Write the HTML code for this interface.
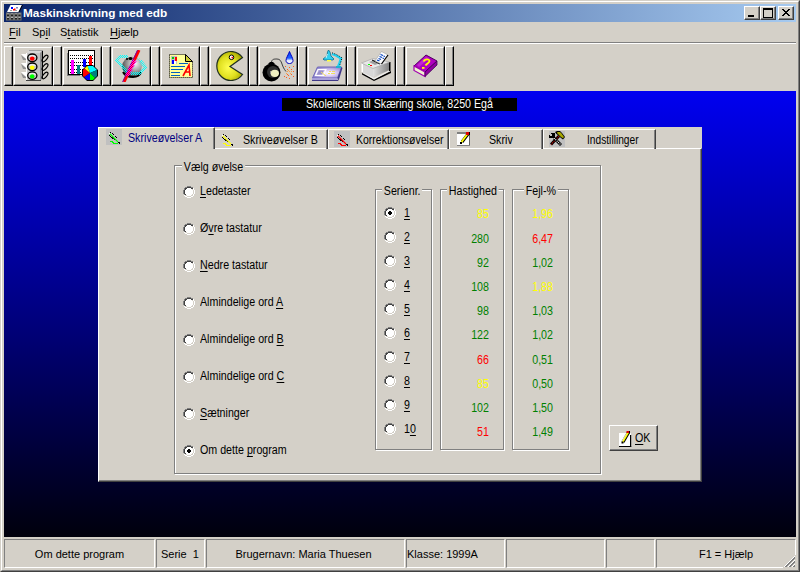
<!DOCTYPE html>
<html><head><meta charset="utf-8">
<style>
*{margin:0;padding:0;box-sizing:border-box}
html,body{width:800px;height:572px;overflow:hidden;background:#D4D0C8;font-family:"Liberation Sans",sans-serif;font-size:11px;color:#000}
.a{position:absolute}
.t{position:absolute;white-space:pre;line-height:13px}
u{text-decoration:underline;text-decoration-thickness:1px;text-underline-offset:1.5px;text-decoration-skip-ink:none}
/* window frame */
#frame{left:0;top:0;width:800px;height:572px;border-top:1px solid #D4D0C8;border-left:1px solid #D4D0C8;border-right:1px solid #404040;border-bottom:1px solid #404040}
#frame2{left:1px;top:1px;width:798px;height:570px;border-top:1px solid #fff;border-left:1px solid #fff;border-right:1px solid #808080;border-bottom:1px solid #808080}
#title{left:4px;top:4px;width:792px;height:18px;background:linear-gradient(to right,#0A246A,#A6CAF0)}
.cbtn{position:absolute;top:6px;width:16px;height:14px;background:#D4D0C8;border-top:1px solid #fff;border-left:1px solid #fff;border-right:1px solid #404040;border-bottom:1px solid #404040;box-shadow:inset -1px -1px 0 #808080}
.sep{position:absolute;top:46px;width:9px;height:40px;border-top:1px solid #fff;border-left:1px solid #fff;border-right:1px solid #000;border-bottom:1px solid #000;box-shadow:inset -1px -1px 0 #808080}
.btn{position:absolute;top:46px;width:40px;height:40px;border-top:1px solid #D4D0C8;border-left:1px solid #D4D0C8;border-right:1px solid #000;border-bottom:1px solid #000}
.btn>div{position:absolute;left:0;top:0;width:38px;height:38px;border-top:1px solid #fff;border-left:1px solid #fff;border-right:1px solid #808080;border-bottom:1px solid #808080}
.btn svg{position:absolute;left:3px;top:3px}
#desk{left:4px;top:91px;width:792px;height:446px;background:linear-gradient(to bottom,#0000F0 0%,#000080 50%,#00000C 100%)}
#banner{left:282px;top:98px;width:235px;height:13px;background:#000}
#form{left:98px;top:127px;width:604px;height:355px;background:#D4D0C8}
.tl{letter-spacing:0}
.s{font-size:12px;transform:scaleX(0.89);transform-origin:0 0}
.sc{font-size:12px;transform:scaleX(0.89);transform-origin:50% 0}
.sr{font-size:12px;transform:scaleX(0.89);transform-origin:100% 0}
.tab{position:absolute;top:129px;height:20px;border-top:1px solid #fff;border-left:1px solid #fff;border-right:1px solid #404040;box-shadow:inset -1px 0 0 #808080}
.grp{position:absolute;border:1px solid #808080;box-shadow:1px 1px 0 #fff inset, 1px 1px 0 #fff}
.lbl{position:absolute;background:#D4D0C8;white-space:pre;line-height:13px;padding:0 2px}
.radio{position:absolute;width:12px;height:12px}
.sb{position:absolute;top:539px;height:29px;border-top:1px solid #808080;border-left:1px solid #808080;border-right:1px solid #fff;border-bottom:1px solid #fff}
.num{position:absolute;white-space:pre;line-height:13px;text-align:right}
.y{color:#FFFF00}.g{color:#008000}.r{color:#FF0000}
</style></head><body>
<div id="frame" class="a"></div>
<div id="frame2" class="a"></div>
<div id="title" class="a"></div>
<div class="t" style="left:23px;top:7px;color:#fff;font-weight:bold;font-size:11.8px">Maskinskrivning med edb</div>
<div class="cbtn" style="left:744px"></div>
<div class="cbtn" style="left:760px"></div>
<div class="cbtn" style="left:778px"></div>
<svg class="a" style="left:744px;top:6px" width="50" height="14" viewBox="0 0 50 14" shape-rendering="crispEdges">
<rect x="4" y="9" width="6" height="2" fill="#000"/>
<rect x="19" y="2" width="9" height="9" fill="none" stroke="#000" stroke-width="1" transform="translate(0.5,0.5)"/>
<rect x="19" y="2" width="9" height="2" fill="#000"/>
<path d="M38 3h2v1h1v1h2v-1h1v-1h2v1h-1v1h-1v1h-1v1h1v1h1v1h1v1h-2v-1h-1v-1h-2v1h-1v1h-2v-1h1v-1h1v-1h1v-1h-1v-1h-1v-1h-1z" fill="#000"/>
</svg>
<svg class="a" style="left:5px;top:4px" width="18" height="18" viewBox="0 0 18 18">
<polygon points="5.5,1 17,1 13.5,8 2,8" fill="#fff"/>
<polygon points="17,1 18,1 14.5,8 13.5,8" fill="#000"/>
<rect x="6" y="3" width="2" height="2" fill="#0000ff"/><rect x="11" y="3" width="2" height="1.5" fill="#8080c0"/>
<rect x="8" y="5" width="2" height="1.5" fill="#f00"/><rect x="9" y="4.5" width="1.5" height="1.5" fill="#f00"/>
<rect x="5" y="6" width="2" height="1" fill="#a0a0a0"/><rect x="10" y="6" width="2" height="1" fill="#a0a0a0"/>
<rect x="1" y="8.5" width="15.5" height="8" fill="#707070"/>
<g fill="#b0b0b0"><rect x="2" y="9.5" width="2" height="1"/><rect x="6" y="9.5" width="2" height="1"/><rect x="10" y="9.5" width="2" height="1"/><rect x="13.5" y="9.5" width="2" height="1"/>
<rect x="2" y="13" width="2" height="1"/><rect x="6" y="13" width="2" height="1"/><rect x="10" y="13" width="2" height="1"/><rect x="13.5" y="13" width="2" height="1"/></g>
<g fill="#202020"><rect x="2" y="10.5" width="2" height="1.5"/><rect x="6" y="10.5" width="2" height="1.5"/><rect x="10" y="10.5" width="2" height="1.5"/><rect x="13.5" y="10.5" width="2" height="1.5"/>
<rect x="2" y="14" width="2" height="1.5"/><rect x="6" y="14" width="2" height="1.5"/><rect x="10" y="14" width="2" height="1.5"/><rect x="13.5" y="14" width="2" height="1.5"/></g>
</svg>
<!-- menu -->
<div class="t" style="left:9px;top:26px"><u>F</u>il</div>
<div class="t" style="left:32px;top:26px">Sp<u>i</u>l</div>
<div class="t" style="left:60px;top:26px">S<u>t</u>atistik</div>
<div class="t" style="left:110px;top:26px"><u>H</u>jælp</div>
<div class="a" style="left:4px;top:42px;width:792px;height:1px;background:#808080"></div>
<div class="a" style="left:4px;top:43px;width:792px;height:1px;background:#fff"></div>
<!-- toolbar -->
<div class="sep" style="left:4px"></div>
<div class="btn" style="left:13px"><div></div></div>
<div class="sep" style="left:53px"></div>
<div class="btn" style="left:62px"><div></div></div>
<div class="sep" style="left:102px"></div>
<div class="btn" style="left:111px"><div></div></div>
<div class="sep" style="left:151px"></div>
<div class="btn" style="left:160px"><div></div></div>
<div class="sep" style="left:200px"></div>
<div class="btn" style="left:209px"><div></div></div>
<div class="sep" style="left:249px"></div>
<div class="btn" style="left:258px"><div></div></div>
<div class="sep" style="left:298px"></div>
<div class="btn" style="left:307px"><div></div></div>
<div class="sep" style="left:347px"></div>
<div class="btn" style="left:356px"><div></div></div>
<div class="sep" style="left:396px"></div>
<div class="btn" style="left:405px"><div></div></div>
<div class="sep" style="left:445px"></div>
<svg class="a" style="left:17px;top:50px" width="32" height="32" viewBox="0 0 32 32">
<g fill="#fff"><polygon points="4,4 9,4 9,9"/><polygon points="4,13 9,13 9,18"/><polygon points="4,22 9,22 9,27"/></g>
<g fill="#909090"><polygon points="4,5 9,9 9,10 6,10"/><polygon points="4,14 9,18 9,19 6,19"/><polygon points="4,23 9,27 9,28 6,28"/></g>
<polygon points="10,3 12,0 26,0 24,3" fill="#d8d8d8"/>
<rect x="12" y="0" width="14" height="1" fill="#a0a0a0"/>
<polygon points="23,3 26,0 26,28 23,31" fill="#909090"/>
<rect x="25" y="1" width="1" height="27" fill="#000"/>
<rect x="9" y="3" width="14" height="28" fill="#c4c4c4"/>
<rect x="9" y="3" width="1" height="28" fill="#fff"/><rect x="9" y="30" width="15" height="1" fill="#404040"/>
<g fill="none" stroke="#000" stroke-width="1.2">
<ellipse cx="28" cy="8.5" rx="1.8" ry="4" transform="rotate(40 28 8.5)"/>
<ellipse cx="28" cy="17" rx="1.8" ry="4" transform="rotate(40 28 17)"/>
<ellipse cx="28" cy="25.5" rx="1.8" ry="4" transform="rotate(40 28 25.5)"/></g>
<g fill="#e8e8e8"><rect x="12" y="5" width="7" height="2"/><rect x="12" y="14" width="7" height="2"/><rect x="12" y="23" width="7" height="2"/></g>
<g stroke="#000" stroke-width="1.3" fill="none"><ellipse cx="15.3" cy="7.8" rx="4.6" ry="3.8"/><ellipse cx="15.3" cy="16.8" rx="4.6" ry="3.8"/><ellipse cx="15.3" cy="25.6" rx="4.6" ry="3.8"/></g>
<ellipse cx="15.2" cy="8.6" rx="2.3" ry="2.2" fill="#f00"/><ellipse cx="15.2" cy="17.6" rx="2.3" ry="2.2" fill="#ff0"/><ellipse cx="15.2" cy="26.4" rx="2.3" ry="2.2" fill="#0f0"/>
</svg>
<svg class="a" style="left:66px;top:50px" width="32" height="32" viewBox="0 0 32 32">
<rect x="1" y="3" width="13" height="23" fill="#808080"/>
<rect x="2.5" y="0.5" width="26" height="24" fill="#fff" stroke="#000" stroke-width="1"/>
<g fill="#000"><rect x="4" y="5" width="1" height="1"/><rect x="6" y="5" width="1" height="1"/><rect x="8" y="5" width="1" height="1"/><rect x="10" y="5" width="1" height="1"/><rect x="12" y="5" width="1" height="1"/><rect x="14" y="5" width="1" height="1"/><rect x="16" y="5" width="1" height="1"/><rect x="18" y="5" width="1" height="1"/><rect x="20" y="5" width="1" height="1"/><rect x="22" y="5" width="1" height="1"/><rect x="24" y="5" width="1" height="1"/><rect x="26" y="5" width="1" height="1"/><rect x="4" y="8" width="1" height="1"/><rect x="6" y="8" width="1" height="1"/><rect x="8" y="8" width="1" height="1"/><rect x="10" y="8" width="1" height="1"/><rect x="12" y="8" width="1" height="1"/><rect x="14" y="8" width="1" height="1"/><rect x="16" y="8" width="1" height="1"/><rect x="18" y="8" width="1" height="1"/><rect x="20" y="8" width="1" height="1"/><rect x="22" y="8" width="1" height="1"/><rect x="24" y="8" width="1" height="1"/><rect x="26" y="8" width="1" height="1"/><rect x="4" y="12" width="1" height="1"/><rect x="6" y="12" width="1" height="1"/><rect x="8" y="12" width="1" height="1"/><rect x="10" y="12" width="1" height="1"/><rect x="12" y="12" width="1" height="1"/><rect x="14" y="12" width="1" height="1"/><rect x="16" y="12" width="1" height="1"/><rect x="18" y="12" width="1" height="1"/><rect x="20" y="12" width="1" height="1"/><rect x="22" y="12" width="1" height="1"/><rect x="24" y="12" width="1" height="1"/><rect x="26" y="12" width="1" height="1"/><rect x="4" y="15" width="1" height="1"/><rect x="6" y="15" width="1" height="1"/><rect x="8" y="15" width="1" height="1"/><rect x="10" y="15" width="1" height="1"/><rect x="12" y="15" width="1" height="1"/><rect x="14" y="15" width="1" height="1"/><rect x="16" y="15" width="1" height="1"/><rect x="18" y="15" width="1" height="1"/><rect x="20" y="15" width="1" height="1"/><rect x="22" y="15" width="1" height="1"/><rect x="24" y="15" width="1" height="1"/><rect x="26" y="15" width="1" height="1"/><rect x="4" y="19" width="1" height="1"/><rect x="6" y="19" width="1" height="1"/><rect x="8" y="19" width="1" height="1"/><rect x="10" y="19" width="1" height="1"/><rect x="12" y="19" width="1" height="1"/><rect x="14" y="19" width="1" height="1"/><rect x="16" y="19" width="1" height="1"/><rect x="18" y="19" width="1" height="1"/><rect x="20" y="19" width="1" height="1"/><rect x="22" y="19" width="1" height="1"/><rect x="24" y="19" width="1" height="1"/><rect x="26" y="19" width="1" height="1"/><rect x="4" y="22" width="1" height="1"/><rect x="6" y="22" width="1" height="1"/><rect x="8" y="22" width="1" height="1"/><rect x="10" y="22" width="1" height="1"/><rect x="12" y="22" width="1" height="1"/><rect x="14" y="22" width="1" height="1"/><rect x="16" y="22" width="1" height="1"/><rect x="18" y="22" width="1" height="1"/><rect x="20" y="22" width="1" height="1"/><rect x="22" y="22" width="1" height="1"/><rect x="24" y="22" width="1" height="1"/><rect x="26" y="22" width="1" height="1"/></g>
<rect x="5" y="10" width="3" height="14" fill="#f0f"/>
<rect x="11" y="15" width="3" height="9" fill="#008080"/>
<rect x="17" y="9" width="3" height="8" fill="#00f"/>
<rect x="23" y="6" width="3" height="9" fill="#f00"/>
<g transform="translate(24,23)">
<polygon points="-3,-8 3,-8 8,-3 8,3 3,8 -3,8 -8,3 -8,-3" fill="#000"/>
<path d="M0,0 L-2.5,-7 L2.5,-7 L3,-7 L7,-3 Z" fill="#0ff"/>
<path d="M0,0 L7,-3 L7,3 L5,5 Z" fill="#008080"/>
<path d="M0,0 L5,5 L3,7 L0,7 Z" fill="#0f0"/>
<path d="M0,0 L0,7 L-3,7 L-6,4 Z" fill="#00f"/>
<path d="M0,0 L-6,4 L-7,3 L-7,-3 L-5.5,-4.5 Z" fill="#f00"/>
<path d="M0,0 L-5.5,-4.5 L-3,-7 L-2.5,-7 Z" fill="#ff0"/>
</g>
</svg>
<svg class="a" style="left:115px;top:50px" width="32" height="32" viewBox="0 0 32 32">
<defs><radialGradient id="gg" cx="0.65" cy="0.35" r="0.75"><stop offset="0" stop-color="#f8f8f8"/><stop offset="0.45" stop-color="#a8a8a8"/><stop offset="0.8" stop-color="#606060"/><stop offset="1" stop-color="#000"/></radialGradient>
<pattern id="dith" width="2" height="2" patternUnits="userSpaceOnUse"><rect width="1" height="1" fill="#0ff"/><rect x="1" y="1" width="1" height="1" fill="#0ff"/></pattern>
<pattern id="dithm" width="2" height="2" patternUnits="userSpaceOnUse"><rect width="1" height="1" fill="#f0f"/><rect x="1" y="1" width="1" height="1" fill="#f0f"/></pattern></defs>
<path d="M13,6.5 L5,6.5 L1.5,10 L5,14" fill="none" stroke="url(#dith)" stroke-width="3"/>
<path d="M22,10 L25,10" fill="none" stroke="url(#dith)" stroke-width="3"/>
<circle cx="17" cy="16.5" r="9.8" fill="url(#gg)"/>
<path d="M8,22 C10,26 14,27 18,27 C22,27 25,25 26,22" fill="none" stroke="#000" stroke-width="2"/>
<ellipse cx="15.5" cy="8.5" rx="2" ry="1.6" fill="#000"/><rect x="11" y="8" width="2" height="2" fill="#202020"/>
<path d="M1.5,10 L11,21 L15,23.5 L25,23.5 L30.5,17 L25,10.5" fill="none" stroke="url(#dith)" stroke-width="3"/>
<path d="M24,0 L9,32" stroke="#f00" stroke-width="3"/>
<path d="M22.6,0 L7.6,32" stroke="#8000a0" stroke-width="1"/>
<path d="M20,10 L12,26" stroke="url(#dithm)" stroke-width="4"/>
</svg>
<svg class="a" style="left:164px;top:50px" width="32" height="32" viewBox="0 0 32 32">
<polygon points="5.5,4.5 21.5,4.5 28.5,11.5 28.5,27.5 5.5,27.5" fill="#ffff99" stroke="#000" stroke-width="1" stroke-dasharray="1,1"/>
<polygon points="21.5,4.5 28.5,11.5 21.5,11.5" fill="#cccc33" stroke="#000" stroke-width="1"/>
<rect x="7" y="6" width="6" height="8" fill="#c0c0c0"/><rect x="8" y="7" width="2" height="2" fill="#0c0"/><rect x="11" y="7" width="2" height="4" fill="#f00"/><rect x="8" y="10" width="2" height="4" fill="#00f"/><rect x="10" y="11" width="2" height="3" fill="#fff"/>
<g fill="#0060c0"><rect x="15" y="13" width="9" height="1"/><rect x="7" y="16" width="14" height="1"/><rect x="7" y="19" width="12" height="1"/><rect x="7" y="22" width="9" height="1"/><rect x="7" y="25" width="9" height="1"/></g>
<path d="M19,26 L25,15 L26,26 M21,22 L26,22" fill="none" stroke="#f00" stroke-width="1.6"/>
</svg>
<svg class="a" style="left:213px;top:50px" width="32" height="32" viewBox="0 0 32 32">
<defs><radialGradient id="pg" cx="0.45" cy="0.55" r="0.6"><stop offset="0" stop-color="#ffff50"/><stop offset="0.6" stop-color="#e0e020"/><stop offset="1" stop-color="#a8a800"/></radialGradient></defs>
<path d="M29.5,7.5 A14.2,14.5 0 1 0 29.5,24.5 L17,16.5 Z" fill="url(#pg)" stroke="#203020" stroke-width="1.2"/>
<circle cx="18.5" cy="7.3" r="2.3" fill="#fff" stroke="#000" stroke-width="1"/><rect x="18.5" y="6.8" width="1.5" height="1.5" fill="#f00"/>
</svg>
<svg class="a" style="left:262px;top:50px" width="32" height="32" viewBox="0 0 32 32">
<defs><linearGradient id="dg" x1="0" y1="0" x2="0" y2="1"><stop offset="0" stop-color="#0040ff"/><stop offset="0.55" stop-color="#2060ff"/><stop offset="0.75" stop-color="#e0e8ff"/><stop offset="1" stop-color="#fff"/></linearGradient></defs>
<path d="M9.5,12 C10,9 12,9 15,9 C18,9 19,11 20,14 C21,17 22,19 24,21.5" fill="none" stroke="#404040" stroke-width="1"/>
<polygon points="8,12 11,12 13,14 6,14" fill="#000"/>
<circle cx="9.5" cy="22.5" r="9" fill="#000"/>
<circle cx="11" cy="22" r="6" fill="#303030"/>
<ellipse cx="12.8" cy="23.3" rx="4.2" ry="3.6" fill="#f0f0c0"/>
<rect x="8" y="21" width="1" height="3" fill="#909090"/>
<path d="M27.5,1.5 C28.5,4.5 31,8 31,10.5 C31,12.5 29.5,13.5 27.5,13.5 C25.5,13.5 24,12.5 24,10.5 C24,8 26.5,4.5 27.5,1.5Z" fill="url(#dg)" stroke="#0000c0" stroke-width="1"/>
<g fill="#ff6020"><rect x="23" y="16" width="1" height="1"/><rect x="27" y="17" width="1" height="1"/><rect x="31" y="16" width="1" height="1"/><rect x="25" y="19" width="1" height="1"/><rect x="29" y="19" width="1" height="1"/>
<rect x="22" y="26" width="1" height="1"/><rect x="31" y="21" width="1" height="1"/><rect x="25" y="24" width="1" height="1"/><rect x="29" y="24" width="1" height="1"/><rect x="24" y="27" width="1" height="1"/><rect x="31" y="26" width="1" height="1"/><rect x="27" y="28" width="1" height="1"/><rect x="26" y="25" width="1" height="1"/></g>
<g fill="#ffa040"><rect x="25" y="21" width="1" height="1"/><rect x="27" y="21" width="1" height="1"/><rect x="29" y="21" width="1" height="1"/><rect x="26" y="20" width="1" height="1"/><rect x="28" y="23" width="1" height="1"/><rect x="24" y="23" width="1" height="1"/></g>
</svg>
<svg class="a" style="left:311px;top:50px" width="32" height="32" viewBox="0 0 32 32">
<defs><radialGradient id="lg" cx="0.55" cy="0.55" r="0.6"><stop offset="0" stop-color="#fff"/><stop offset="0.35" stop-color="#e8d8f8"/><stop offset="1" stop-color="#9088d0"/></radialGradient></defs>
<polygon points="6.5,17 30.5,17 26.5,28 1.5,28" fill="url(#lg)" stroke="#7068b8" stroke-width="1"/>
<polygon points="1,28 26.5,28 26.5,31 1,31" fill="#a8a0d8"/>
<rect x="1" y="30" width="26" height="1" fill="#403888"/>
<polygon points="26.5,28 30.5,17 31.5,18 27.5,31" fill="#403888"/>
<polygon points="7,19.5 15,19.5 12.5,25.5 4.5,25.5" fill="none" stroke="#fff" stroke-width="1.2"/>
<polygon points="8,20.5 13,20.5 11,24.5 6,24.5" fill="#9890c8"/>
<path d="M10,22 L15,26" stroke="#f0e060" stroke-width="1"/>
<g fill="#f0e060"><rect x="18" y="21" width="2" height="1"/><rect x="21" y="21" width="3" height="1"/><rect x="17" y="23" width="2" height="1"/><rect x="20" y="23" width="4" height="1"/></g>
<path d="M21,4 L25,5.5 L30,8.5 L28.5,13 L27,17" fill="none" stroke="#20d0f0" stroke-width="2.4"/>
<path d="M21,2.8 L25,4.3 L31,7.8 L29.5,13 L28,17" fill="none" stroke="#000" stroke-width="0.9" stroke-dasharray="1,1.5"/>
<rect x="25" y="16" width="5" height="2" fill="#20b0d0"/>
<polygon points="17.5,0 19,2 20,6 23,9 22,10 13,10 12,9 16,6 16.5,2" fill="#30d0f0" stroke="#006080" stroke-width="0.7"/>
<path d="M15,8 L16.5,4" stroke="#c0f8ff" stroke-width="1"/>
<rect x="16" y="10" width="4" height="1.5" fill="#ffff40"/>
</svg>
<svg class="a" style="left:360px;top:50px" width="32" height="32" viewBox="0 0 32 32">
<defs><linearGradient id="prg" x1="0" y1="0" x2="1" y2="0"><stop offset="0" stop-color="#e0e0e0"/><stop offset="1" stop-color="#808080"/></linearGradient></defs>
<polygon points="2,23 14,29.5 31,21 31,23 14,31 2,24.5" fill="#000"/>
<polygon points="3,22 14,28 30,20 30,21 14,29.5 3,23" fill="#f0f0f0"/>
<polygon points="1.5,13 13,18.5 13,27 2,22" fill="#d8d8d8"/>
<rect x="1.5" y="13" width="1.5" height="9" fill="#fff"/>
<polygon points="13,18.5 29.5,12 29.5,20 13,27" fill="url(#prg)"/>
<rect x="29" y="12" width="1.5" height="9" fill="#000"/>
<polygon points="1.5,13 13,8.5 29.5,12 13,18.5" fill="#e8e8e8" stroke="#a0a0a0" stroke-width="0.6"/>
<polygon points="9,12 14,10 20,13 15,15" fill="#a0a0a0"/>
<path d="M12,10 L20,14" stroke="#000" stroke-width="1"/>
<polygon points="15,11 21.5,1.5 28,5 21.5,14" fill="#fff" stroke="#a0a0a0" stroke-width="0.6"/>
<path d="M28,5 L21.5,14" stroke="#000" stroke-width="1.2"/>
<g stroke="#0040c0" stroke-width="1.2"><path d="M20.5,4.5 L23,5.5"/><path d="M19.5,6.5 L22,7.5"/><path d="M18.5,8.5 L21,9.5"/><path d="M17,10 L19.5,11"/><path d="M23.5,6 L25,6.5"/><path d="M22.5,8 L24,8.5"/></g>
<rect x="8" y="14" width="2" height="1" fill="#0f0"/><rect x="10" y="15" width="2" height="1" fill="#f00"/>
</svg>
<svg class="a" style="left:409px;top:50px" width="32" height="32" viewBox="0 0 32 32">
<polygon points="5,16 17,5 28,11 16,22" fill="#b000c0" stroke="#500060" stroke-width="1"/>
<polygon points="8,15 17,7 20,8.5 10,17" fill="#d040e0" opacity="0.6"/>
<polygon points="5,16 16,22 16,26.5 5,20.5" fill="#f0f0d0" stroke="#a000b0" stroke-width="1.2"/>
<polygon points="16,22 28,11 28,15 16,26.5" fill="#9000a0" stroke="#400050" stroke-width="0.8"/>
<path d="M14.5,11.5 C15.5,9 20.5,8.5 20.5,11 C20.5,13 17.5,13.5 16.5,15.5" fill="none" stroke="#ffff00" stroke-width="1.8"/>
<rect x="13" y="17" width="2.5" height="1.8" fill="#ffff00"/>
</svg>

<div id="desk" class="a"></div>
<div id="banner" class="a"></div>
<div class="t sc" style="left:282px;top:98px;width:235px;text-align:center;color:#fff">Skolelicens til Skæring skole, 8250 Egå</div>

<div id="form" class="a"></div>
<!-- tab page -->
<div class="a" style="left:98px;top:148px;width:604px;height:334px;border-top:1px solid #fff;border-left:1px solid #fff;border-right:1px solid #404040;border-bottom:1px solid #404040;box-shadow:inset -1px -1px 0 #808080"></div>
<div class="tab" style="left:214px;width:114px"></div>
<div class="tab" style="left:328px;width:121px"></div>
<div class="tab" style="left:449px;width:94px"></div>
<div class="tab" style="left:543px;width:113px"></div>
<div class="a" style="left:98px;top:127px;width:117px;height:22px;background:#D4D0C8;border-top:1px solid #fff;border-left:1px solid #fff;border-right:1px solid #404040;box-shadow:inset -1px 0 0 #808080"></div>
<svg class="a" style="left:106px;top:129px" width="16" height="16" viewBox="0 0 16 16"><rect x="0" y="0" width="16" height="16" fill="#c0c0c0"/>
<g fill="#000"><rect x="4" y="3" width="1" height="1"/><rect x="6" y="4" width="1" height="1"/><rect x="7" y="5" width="1" height="1"/><rect x="9" y="7" width="1" height="1"/><rect x="10" y="8" width="1" height="1"/>
<rect x="3" y="6" width="1" height="1"/><rect x="4" y="7" width="1" height="1"/><rect x="5" y="8" width="2" height="1"/><rect x="6" y="9" width="2" height="1"/><rect x="8" y="10" width="1" height="1"/>
<rect x="11" y="12" width="1" height="1"/><rect x="12" y="13" width="2" height="1"/><rect x="13" y="14" width="1" height="1"/></g>
<path d="M3.5,4.5 L12,13" stroke="#00ff00" stroke-width="1.1"/>
<rect x="3" y="4" width="1" height="1" fill="#fff"/>
<rect x="4" y="12" width="3" height="1" fill="#00ff00"/><rect x="6" y="13" width="2" height="1" fill="#00ff00"/><rect x="7" y="14" width="5" height="1" fill="#00ff00"/>
</svg>
<svg class="a" style="left:219px;top:131px" width="16" height="16" viewBox="0 0 16 16">
<g fill="#000"><rect x="4" y="3" width="1" height="1"/><rect x="6" y="4" width="1" height="1"/><rect x="7" y="5" width="1" height="1"/><rect x="9" y="7" width="1" height="1"/><rect x="10" y="8" width="1" height="1"/>
<rect x="3" y="6" width="1" height="1"/><rect x="4" y="7" width="1" height="1"/><rect x="5" y="8" width="2" height="1"/><rect x="6" y="9" width="2" height="1"/><rect x="8" y="10" width="1" height="1"/>
<rect x="11" y="12" width="1" height="1"/><rect x="12" y="13" width="2" height="1"/><rect x="13" y="14" width="1" height="1"/></g>
<path d="M3.5,4.5 L12,13" stroke="#ffff00" stroke-width="1.1"/>
<rect x="3" y="4" width="1" height="1" fill="#fff"/>
<rect x="4" y="12" width="3" height="1" fill="#ffff00"/><rect x="6" y="13" width="2" height="1" fill="#ffff00"/><rect x="7" y="14" width="5" height="1" fill="#ffff00"/>
</svg>
<svg class="a" style="left:334px;top:131px" width="16" height="16" viewBox="0 0 16 16"><rect x="0" y="0" width="16" height="16" fill="#c0c0c0"/>
<g fill="#000"><rect x="4" y="3" width="1" height="1"/><rect x="6" y="4" width="1" height="1"/><rect x="7" y="5" width="1" height="1"/><rect x="9" y="7" width="1" height="1"/><rect x="10" y="8" width="1" height="1"/>
<rect x="3" y="6" width="1" height="1"/><rect x="4" y="7" width="1" height="1"/><rect x="5" y="8" width="2" height="1"/><rect x="6" y="9" width="2" height="1"/><rect x="8" y="10" width="1" height="1"/>
<rect x="11" y="12" width="1" height="1"/><rect x="12" y="13" width="2" height="1"/><rect x="13" y="14" width="1" height="1"/></g>
<path d="M3.5,4.5 L12,13" stroke="#ff0000" stroke-width="1.1"/>
<rect x="3" y="4" width="1" height="1" fill="#fff"/>
<rect x="4" y="12" width="3" height="1" fill="#ff0000"/><rect x="6" y="13" width="2" height="1" fill="#ff0000"/><rect x="7" y="14" width="5" height="1" fill="#ff0000"/>
</svg>
<svg class="a" style="left:456px;top:131px" width="16" height="16" viewBox="0 0 16 16">
<rect x="1" y="1" width="13" height="14" fill="#fff"/>
<rect x="1" y="1" width="10" height="2" fill="#808080"/>
<rect x="13" y="4" width="1" height="11" fill="#606060"/><rect x="1" y="14" width="13" height="1" fill="#808080"/>
<path d="M12,3 L6,11" stroke="#000" stroke-width="3"/>
<path d="M11.5,3 L5.5,11" stroke="#ffff00" stroke-width="1.8"/>
<rect x="10" y="1" width="3" height="3" fill="#e00000"/><rect x="13" y="1" width="1" height="3" fill="#000"/>
<rect x="4" y="11" width="2" height="2" fill="#000"/>
</svg>
<svg class="a" style="left:549px;top:131px" width="16" height="16" viewBox="0 0 16 16">
<rect x="0" y="0" width="16" height="16" fill="#c0c0c0"/>
<path d="M10,5 L2,13.5" stroke="#000" stroke-width="2.8"/><path d="M10,5 L2,13.5" stroke="#c00000" stroke-width="1.2" stroke-dasharray="1.2,1"/>
<path d="M5,7 L12,14" stroke="#000" stroke-width="2.8"/><path d="M5,7 L12,14" stroke="#fff" stroke-width="1.2" stroke-dasharray="1,1"/>
<path d="M2,2h4v5h-6v-3h1v1h2v-2h-1z" fill="#000"/>
<polygon points="6,1 8,0 11,0 13,2 16,6 14,8.5 12,7 7,2.5" fill="#000"/>
<polygon points="8.5,1 11,1 12.5,2.5 15,6 14,7.2 12,6 8,2" fill="#a8a800"/>
</svg>
<div class="t s tl" style="left:128px;top:132px;color:#000080">Skriveøvelser A</div>
<div class="t s tl" style="left:243px;top:134px">Skriveøvelser B</div>
<div class="t s tl" style="left:356px;top:134px;transform:scaleX(0.875)">Korrektionsøvelser</div>
<div class="t s tl" style="left:489px;top:134px">Skriv</div>
<div class="t s tl" style="left:587px;top:134px;transform:scaleX(0.85)">Indstillinger</div>

<!-- group boxes -->
<div class="grp" style="left:174px;top:165px;width:427px;height:309px"></div>
<div class="lbl s" style="left:182px;top:161px">Vælg øvelse</div>
<div class="grp" style="left:375px;top:189px;width:57px;height:261px"></div>
<div class="lbl s" style="left:382px;top:185px">Serienr.</div>
<div class="grp" style="left:440px;top:189px;width:64px;height:261px"></div>
<div class="lbl s" style="left:447px;top:185px">Hastighed</div>
<div class="grp" style="left:512px;top:189px;width:57px;height:261px"></div>
<div class="lbl s" style="left:524px;top:185px">Fejl-%</div>

<svg class="radio" style="left:183px;top:186px" width="12" height="12" viewBox="0 0 12 12" shape-rendering="crispEdges"><path d="M4 0h4v1h-4zM2 1h2v1h-2zM8 1h2v1h-2zM1 2h1v1h-1zM1 3h1v1h-1zM0 4h1v1h-1zM0 5h1v1h-1zM0 6h1v1h-1zM0 7h1v1h-1zM1 8h1v1h-1z" fill="#808080"/><path d="M4 1h4v1h-4zM2 2h2v1h-2zM8 2h2v1h-2zM2 3h1v1h-1zM1 4h1v1h-1zM1 5h1v1h-1zM1 6h1v1h-1zM1 7h1v1h-1zM2 8h1v1h-1z" fill="#404040"/><path d="M10 2h1v1h-1zM10 3h1v1h-1zM11 4h1v1h-1zM11 5h1v1h-1zM11 6h1v1h-1zM11 7h1v1h-1zM10 8h1v1h-1zM1 9h1v1h-1zM10 9h1v1h-1zM2 10h2v1h-2zM8 10h2v1h-2zM4 11h4v1h-4z" fill="#fff"/><path d="M4 2h4v1h-4zM3 3h6v1h-6zM2 4h8v1h-8zM2 5h8v1h-8zM2 6h8v1h-8zM2 7h8v1h-8zM3 8h6v1h-6zM4 9h4v1h-4z" fill="#fff"/><path d="M9 3h1v1h-1zM10 4h1v1h-1zM10 5h1v1h-1zM10 6h1v1h-1zM10 7h1v1h-1zM9 8h1v1h-1zM2 9h2v1h-2zM8 9h2v1h-2zM4 10h4v1h-4z" fill="#D4D0C8"/></svg>
<div class="t s" style="left:200px;top:185px;"><u>L</u>edetaster</div>
<svg class="radio" style="left:183px;top:223px" width="12" height="12" viewBox="0 0 12 12" shape-rendering="crispEdges"><path d="M4 0h4v1h-4zM2 1h2v1h-2zM8 1h2v1h-2zM1 2h1v1h-1zM1 3h1v1h-1zM0 4h1v1h-1zM0 5h1v1h-1zM0 6h1v1h-1zM0 7h1v1h-1zM1 8h1v1h-1z" fill="#808080"/><path d="M4 1h4v1h-4zM2 2h2v1h-2zM8 2h2v1h-2zM2 3h1v1h-1zM1 4h1v1h-1zM1 5h1v1h-1zM1 6h1v1h-1zM1 7h1v1h-1zM2 8h1v1h-1z" fill="#404040"/><path d="M10 2h1v1h-1zM10 3h1v1h-1zM11 4h1v1h-1zM11 5h1v1h-1zM11 6h1v1h-1zM11 7h1v1h-1zM10 8h1v1h-1zM1 9h1v1h-1zM10 9h1v1h-1zM2 10h2v1h-2zM8 10h2v1h-2zM4 11h4v1h-4z" fill="#fff"/><path d="M4 2h4v1h-4zM3 3h6v1h-6zM2 4h8v1h-8zM2 5h8v1h-8zM2 6h8v1h-8zM2 7h8v1h-8zM3 8h6v1h-6zM4 9h4v1h-4z" fill="#fff"/><path d="M9 3h1v1h-1zM10 4h1v1h-1zM10 5h1v1h-1zM10 6h1v1h-1zM10 7h1v1h-1zM9 8h1v1h-1zM2 9h2v1h-2zM8 9h2v1h-2zM4 10h4v1h-4z" fill="#D4D0C8"/></svg>
<div class="t s" style="left:200px;top:222px;">Ø<u>v</u>re tastatur</div>
<svg class="radio" style="left:183px;top:260px" width="12" height="12" viewBox="0 0 12 12" shape-rendering="crispEdges"><path d="M4 0h4v1h-4zM2 1h2v1h-2zM8 1h2v1h-2zM1 2h1v1h-1zM1 3h1v1h-1zM0 4h1v1h-1zM0 5h1v1h-1zM0 6h1v1h-1zM0 7h1v1h-1zM1 8h1v1h-1z" fill="#808080"/><path d="M4 1h4v1h-4zM2 2h2v1h-2zM8 2h2v1h-2zM2 3h1v1h-1zM1 4h1v1h-1zM1 5h1v1h-1zM1 6h1v1h-1zM1 7h1v1h-1zM2 8h1v1h-1z" fill="#404040"/><path d="M10 2h1v1h-1zM10 3h1v1h-1zM11 4h1v1h-1zM11 5h1v1h-1zM11 6h1v1h-1zM11 7h1v1h-1zM10 8h1v1h-1zM1 9h1v1h-1zM10 9h1v1h-1zM2 10h2v1h-2zM8 10h2v1h-2zM4 11h4v1h-4z" fill="#fff"/><path d="M4 2h4v1h-4zM3 3h6v1h-6zM2 4h8v1h-8zM2 5h8v1h-8zM2 6h8v1h-8zM2 7h8v1h-8zM3 8h6v1h-6zM4 9h4v1h-4z" fill="#fff"/><path d="M9 3h1v1h-1zM10 4h1v1h-1zM10 5h1v1h-1zM10 6h1v1h-1zM10 7h1v1h-1zM9 8h1v1h-1zM2 9h2v1h-2zM8 9h2v1h-2zM4 10h4v1h-4z" fill="#D4D0C8"/></svg>
<div class="t s" style="left:200px;top:259px;"><u>N</u>edre tastatur</div>
<svg class="radio" style="left:183px;top:297px" width="12" height="12" viewBox="0 0 12 12" shape-rendering="crispEdges"><path d="M4 0h4v1h-4zM2 1h2v1h-2zM8 1h2v1h-2zM1 2h1v1h-1zM1 3h1v1h-1zM0 4h1v1h-1zM0 5h1v1h-1zM0 6h1v1h-1zM0 7h1v1h-1zM1 8h1v1h-1z" fill="#808080"/><path d="M4 1h4v1h-4zM2 2h2v1h-2zM8 2h2v1h-2zM2 3h1v1h-1zM1 4h1v1h-1zM1 5h1v1h-1zM1 6h1v1h-1zM1 7h1v1h-1zM2 8h1v1h-1z" fill="#404040"/><path d="M10 2h1v1h-1zM10 3h1v1h-1zM11 4h1v1h-1zM11 5h1v1h-1zM11 6h1v1h-1zM11 7h1v1h-1zM10 8h1v1h-1zM1 9h1v1h-1zM10 9h1v1h-1zM2 10h2v1h-2zM8 10h2v1h-2zM4 11h4v1h-4z" fill="#fff"/><path d="M4 2h4v1h-4zM3 3h6v1h-6zM2 4h8v1h-8zM2 5h8v1h-8zM2 6h8v1h-8zM2 7h8v1h-8zM3 8h6v1h-6zM4 9h4v1h-4z" fill="#fff"/><path d="M9 3h1v1h-1zM10 4h1v1h-1zM10 5h1v1h-1zM10 6h1v1h-1zM10 7h1v1h-1zM9 8h1v1h-1zM2 9h2v1h-2zM8 9h2v1h-2zM4 10h4v1h-4z" fill="#D4D0C8"/></svg>
<div class="t s" style="left:200px;top:296px;">Almindelige ord <u>A</u></div>
<svg class="radio" style="left:183px;top:334px" width="12" height="12" viewBox="0 0 12 12" shape-rendering="crispEdges"><path d="M4 0h4v1h-4zM2 1h2v1h-2zM8 1h2v1h-2zM1 2h1v1h-1zM1 3h1v1h-1zM0 4h1v1h-1zM0 5h1v1h-1zM0 6h1v1h-1zM0 7h1v1h-1zM1 8h1v1h-1z" fill="#808080"/><path d="M4 1h4v1h-4zM2 2h2v1h-2zM8 2h2v1h-2zM2 3h1v1h-1zM1 4h1v1h-1zM1 5h1v1h-1zM1 6h1v1h-1zM1 7h1v1h-1zM2 8h1v1h-1z" fill="#404040"/><path d="M10 2h1v1h-1zM10 3h1v1h-1zM11 4h1v1h-1zM11 5h1v1h-1zM11 6h1v1h-1zM11 7h1v1h-1zM10 8h1v1h-1zM1 9h1v1h-1zM10 9h1v1h-1zM2 10h2v1h-2zM8 10h2v1h-2zM4 11h4v1h-4z" fill="#fff"/><path d="M4 2h4v1h-4zM3 3h6v1h-6zM2 4h8v1h-8zM2 5h8v1h-8zM2 6h8v1h-8zM2 7h8v1h-8zM3 8h6v1h-6zM4 9h4v1h-4z" fill="#fff"/><path d="M9 3h1v1h-1zM10 4h1v1h-1zM10 5h1v1h-1zM10 6h1v1h-1zM10 7h1v1h-1zM9 8h1v1h-1zM2 9h2v1h-2zM8 9h2v1h-2zM4 10h4v1h-4z" fill="#D4D0C8"/></svg>
<div class="t s" style="left:200px;top:333px;">Almindelige ord <u>B</u></div>
<svg class="radio" style="left:183px;top:371px" width="12" height="12" viewBox="0 0 12 12" shape-rendering="crispEdges"><path d="M4 0h4v1h-4zM2 1h2v1h-2zM8 1h2v1h-2zM1 2h1v1h-1zM1 3h1v1h-1zM0 4h1v1h-1zM0 5h1v1h-1zM0 6h1v1h-1zM0 7h1v1h-1zM1 8h1v1h-1z" fill="#808080"/><path d="M4 1h4v1h-4zM2 2h2v1h-2zM8 2h2v1h-2zM2 3h1v1h-1zM1 4h1v1h-1zM1 5h1v1h-1zM1 6h1v1h-1zM1 7h1v1h-1zM2 8h1v1h-1z" fill="#404040"/><path d="M10 2h1v1h-1zM10 3h1v1h-1zM11 4h1v1h-1zM11 5h1v1h-1zM11 6h1v1h-1zM11 7h1v1h-1zM10 8h1v1h-1zM1 9h1v1h-1zM10 9h1v1h-1zM2 10h2v1h-2zM8 10h2v1h-2zM4 11h4v1h-4z" fill="#fff"/><path d="M4 2h4v1h-4zM3 3h6v1h-6zM2 4h8v1h-8zM2 5h8v1h-8zM2 6h8v1h-8zM2 7h8v1h-8zM3 8h6v1h-6zM4 9h4v1h-4z" fill="#fff"/><path d="M9 3h1v1h-1zM10 4h1v1h-1zM10 5h1v1h-1zM10 6h1v1h-1zM10 7h1v1h-1zM9 8h1v1h-1zM2 9h2v1h-2zM8 9h2v1h-2zM4 10h4v1h-4z" fill="#D4D0C8"/></svg>
<div class="t s" style="left:200px;top:370px;">Almindelige ord <u>C</u></div>
<svg class="radio" style="left:183px;top:408px" width="12" height="12" viewBox="0 0 12 12" shape-rendering="crispEdges"><path d="M4 0h4v1h-4zM2 1h2v1h-2zM8 1h2v1h-2zM1 2h1v1h-1zM1 3h1v1h-1zM0 4h1v1h-1zM0 5h1v1h-1zM0 6h1v1h-1zM0 7h1v1h-1zM1 8h1v1h-1z" fill="#808080"/><path d="M4 1h4v1h-4zM2 2h2v1h-2zM8 2h2v1h-2zM2 3h1v1h-1zM1 4h1v1h-1zM1 5h1v1h-1zM1 6h1v1h-1zM1 7h1v1h-1zM2 8h1v1h-1z" fill="#404040"/><path d="M10 2h1v1h-1zM10 3h1v1h-1zM11 4h1v1h-1zM11 5h1v1h-1zM11 6h1v1h-1zM11 7h1v1h-1zM10 8h1v1h-1zM1 9h1v1h-1zM10 9h1v1h-1zM2 10h2v1h-2zM8 10h2v1h-2zM4 11h4v1h-4z" fill="#fff"/><path d="M4 2h4v1h-4zM3 3h6v1h-6zM2 4h8v1h-8zM2 5h8v1h-8zM2 6h8v1h-8zM2 7h8v1h-8zM3 8h6v1h-6zM4 9h4v1h-4z" fill="#fff"/><path d="M9 3h1v1h-1zM10 4h1v1h-1zM10 5h1v1h-1zM10 6h1v1h-1zM10 7h1v1h-1zM9 8h1v1h-1zM2 9h2v1h-2zM8 9h2v1h-2zM4 10h4v1h-4z" fill="#D4D0C8"/></svg>
<div class="t s" style="left:200px;top:407px;"><u>S</u>ætninger</div>
<svg class="radio" style="left:183px;top:445px" width="12" height="12" viewBox="0 0 12 12" shape-rendering="crispEdges"><path d="M4 0h4v1h-4zM2 1h2v1h-2zM8 1h2v1h-2zM1 2h1v1h-1zM1 3h1v1h-1zM0 4h1v1h-1zM0 5h1v1h-1zM0 6h1v1h-1zM0 7h1v1h-1zM1 8h1v1h-1z" fill="#808080"/><path d="M4 1h4v1h-4zM2 2h2v1h-2zM8 2h2v1h-2zM2 3h1v1h-1zM1 4h1v1h-1zM1 5h1v1h-1zM1 6h1v1h-1zM1 7h1v1h-1zM2 8h1v1h-1z" fill="#404040"/><path d="M10 2h1v1h-1zM10 3h1v1h-1zM11 4h1v1h-1zM11 5h1v1h-1zM11 6h1v1h-1zM11 7h1v1h-1zM10 8h1v1h-1zM1 9h1v1h-1zM10 9h1v1h-1zM2 10h2v1h-2zM8 10h2v1h-2zM4 11h4v1h-4z" fill="#fff"/><path d="M4 2h4v1h-4zM3 3h6v1h-6zM2 4h3v1h-3zM7 4h3v1h-3zM2 5h2v1h-2zM8 5h2v1h-2zM2 6h2v1h-2zM8 6h2v1h-2zM2 7h3v1h-3zM7 7h3v1h-3zM3 8h6v1h-6zM4 9h4v1h-4z" fill="#fff"/><path d="M9 3h1v1h-1zM10 4h1v1h-1zM10 5h1v1h-1zM10 6h1v1h-1zM10 7h1v1h-1zM9 8h1v1h-1zM2 9h2v1h-2zM8 9h2v1h-2zM4 10h4v1h-4z" fill="#D4D0C8"/><path d="M5 4h2v1h-2zM4 5h4v1h-4zM4 6h4v1h-4zM5 7h2v1h-2z" fill="#000"/></svg>
<div class="t s" style="left:200px;top:444px;">Om dette <u>p</u>rogram</div>
<svg class="radio" style="left:384px;top:207px" width="12" height="12" viewBox="0 0 12 12" shape-rendering="crispEdges"><path d="M4 0h4v1h-4zM2 1h2v1h-2zM8 1h2v1h-2zM1 2h1v1h-1zM1 3h1v1h-1zM0 4h1v1h-1zM0 5h1v1h-1zM0 6h1v1h-1zM0 7h1v1h-1zM1 8h1v1h-1z" fill="#808080"/><path d="M4 1h4v1h-4zM2 2h2v1h-2zM8 2h2v1h-2zM2 3h1v1h-1zM1 4h1v1h-1zM1 5h1v1h-1zM1 6h1v1h-1zM1 7h1v1h-1zM2 8h1v1h-1z" fill="#404040"/><path d="M10 2h1v1h-1zM10 3h1v1h-1zM11 4h1v1h-1zM11 5h1v1h-1zM11 6h1v1h-1zM11 7h1v1h-1zM10 8h1v1h-1zM1 9h1v1h-1zM10 9h1v1h-1zM2 10h2v1h-2zM8 10h2v1h-2zM4 11h4v1h-4z" fill="#fff"/><path d="M4 2h4v1h-4zM3 3h6v1h-6zM2 4h3v1h-3zM7 4h3v1h-3zM2 5h2v1h-2zM8 5h2v1h-2zM2 6h2v1h-2zM8 6h2v1h-2zM2 7h3v1h-3zM7 7h3v1h-3zM3 8h6v1h-6zM4 9h4v1h-4z" fill="#fff"/><path d="M9 3h1v1h-1zM10 4h1v1h-1zM10 5h1v1h-1zM10 6h1v1h-1zM10 7h1v1h-1zM9 8h1v1h-1zM2 9h2v1h-2zM8 9h2v1h-2zM4 10h4v1h-4z" fill="#D4D0C8"/><path d="M5 4h2v1h-2zM4 5h4v1h-4zM4 6h4v1h-4zM5 7h2v1h-2z" fill="#000"/></svg>
<div class="t s" style="left:404px;top:207px"><u>1</u></div>
<div class="num sr y" style="left:448px;width:41px;top:208px">85</div>
<div class="num sr y" style="left:515px;width:38px;top:208px">1,96</div>
<svg class="radio" style="left:384px;top:231px" width="12" height="12" viewBox="0 0 12 12" shape-rendering="crispEdges"><path d="M4 0h4v1h-4zM2 1h2v1h-2zM8 1h2v1h-2zM1 2h1v1h-1zM1 3h1v1h-1zM0 4h1v1h-1zM0 5h1v1h-1zM0 6h1v1h-1zM0 7h1v1h-1zM1 8h1v1h-1z" fill="#808080"/><path d="M4 1h4v1h-4zM2 2h2v1h-2zM8 2h2v1h-2zM2 3h1v1h-1zM1 4h1v1h-1zM1 5h1v1h-1zM1 6h1v1h-1zM1 7h1v1h-1zM2 8h1v1h-1z" fill="#404040"/><path d="M10 2h1v1h-1zM10 3h1v1h-1zM11 4h1v1h-1zM11 5h1v1h-1zM11 6h1v1h-1zM11 7h1v1h-1zM10 8h1v1h-1zM1 9h1v1h-1zM10 9h1v1h-1zM2 10h2v1h-2zM8 10h2v1h-2zM4 11h4v1h-4z" fill="#fff"/><path d="M4 2h4v1h-4zM3 3h6v1h-6zM2 4h8v1h-8zM2 5h8v1h-8zM2 6h8v1h-8zM2 7h8v1h-8zM3 8h6v1h-6zM4 9h4v1h-4z" fill="#fff"/><path d="M9 3h1v1h-1zM10 4h1v1h-1zM10 5h1v1h-1zM10 6h1v1h-1zM10 7h1v1h-1zM9 8h1v1h-1zM2 9h2v1h-2zM8 9h2v1h-2zM4 10h4v1h-4z" fill="#D4D0C8"/></svg>
<div class="t s" style="left:404px;top:231px"><u>2</u></div>
<div class="num sr g" style="left:448px;width:41px;top:233px">280</div>
<div class="num sr r" style="left:515px;width:38px;top:233px">6,47</div>
<svg class="radio" style="left:384px;top:255px" width="12" height="12" viewBox="0 0 12 12" shape-rendering="crispEdges"><path d="M4 0h4v1h-4zM2 1h2v1h-2zM8 1h2v1h-2zM1 2h1v1h-1zM1 3h1v1h-1zM0 4h1v1h-1zM0 5h1v1h-1zM0 6h1v1h-1zM0 7h1v1h-1zM1 8h1v1h-1z" fill="#808080"/><path d="M4 1h4v1h-4zM2 2h2v1h-2zM8 2h2v1h-2zM2 3h1v1h-1zM1 4h1v1h-1zM1 5h1v1h-1zM1 6h1v1h-1zM1 7h1v1h-1zM2 8h1v1h-1z" fill="#404040"/><path d="M10 2h1v1h-1zM10 3h1v1h-1zM11 4h1v1h-1zM11 5h1v1h-1zM11 6h1v1h-1zM11 7h1v1h-1zM10 8h1v1h-1zM1 9h1v1h-1zM10 9h1v1h-1zM2 10h2v1h-2zM8 10h2v1h-2zM4 11h4v1h-4z" fill="#fff"/><path d="M4 2h4v1h-4zM3 3h6v1h-6zM2 4h8v1h-8zM2 5h8v1h-8zM2 6h8v1h-8zM2 7h8v1h-8zM3 8h6v1h-6zM4 9h4v1h-4z" fill="#fff"/><path d="M9 3h1v1h-1zM10 4h1v1h-1zM10 5h1v1h-1zM10 6h1v1h-1zM10 7h1v1h-1zM9 8h1v1h-1zM2 9h2v1h-2zM8 9h2v1h-2zM4 10h4v1h-4z" fill="#D4D0C8"/></svg>
<div class="t s" style="left:404px;top:255px"><u>3</u></div>
<div class="num sr g" style="left:448px;width:41px;top:257px">92</div>
<div class="num sr g" style="left:515px;width:38px;top:257px">1,02</div>
<svg class="radio" style="left:384px;top:279px" width="12" height="12" viewBox="0 0 12 12" shape-rendering="crispEdges"><path d="M4 0h4v1h-4zM2 1h2v1h-2zM8 1h2v1h-2zM1 2h1v1h-1zM1 3h1v1h-1zM0 4h1v1h-1zM0 5h1v1h-1zM0 6h1v1h-1zM0 7h1v1h-1zM1 8h1v1h-1z" fill="#808080"/><path d="M4 1h4v1h-4zM2 2h2v1h-2zM8 2h2v1h-2zM2 3h1v1h-1zM1 4h1v1h-1zM1 5h1v1h-1zM1 6h1v1h-1zM1 7h1v1h-1zM2 8h1v1h-1z" fill="#404040"/><path d="M10 2h1v1h-1zM10 3h1v1h-1zM11 4h1v1h-1zM11 5h1v1h-1zM11 6h1v1h-1zM11 7h1v1h-1zM10 8h1v1h-1zM1 9h1v1h-1zM10 9h1v1h-1zM2 10h2v1h-2zM8 10h2v1h-2zM4 11h4v1h-4z" fill="#fff"/><path d="M4 2h4v1h-4zM3 3h6v1h-6zM2 4h8v1h-8zM2 5h8v1h-8zM2 6h8v1h-8zM2 7h8v1h-8zM3 8h6v1h-6zM4 9h4v1h-4z" fill="#fff"/><path d="M9 3h1v1h-1zM10 4h1v1h-1zM10 5h1v1h-1zM10 6h1v1h-1zM10 7h1v1h-1zM9 8h1v1h-1zM2 9h2v1h-2zM8 9h2v1h-2zM4 10h4v1h-4z" fill="#D4D0C8"/></svg>
<div class="t s" style="left:404px;top:279px"><u>4</u></div>
<div class="num sr g" style="left:448px;width:41px;top:281px">108</div>
<div class="num sr y" style="left:515px;width:38px;top:281px">1,88</div>
<svg class="radio" style="left:384px;top:303px" width="12" height="12" viewBox="0 0 12 12" shape-rendering="crispEdges"><path d="M4 0h4v1h-4zM2 1h2v1h-2zM8 1h2v1h-2zM1 2h1v1h-1zM1 3h1v1h-1zM0 4h1v1h-1zM0 5h1v1h-1zM0 6h1v1h-1zM0 7h1v1h-1zM1 8h1v1h-1z" fill="#808080"/><path d="M4 1h4v1h-4zM2 2h2v1h-2zM8 2h2v1h-2zM2 3h1v1h-1zM1 4h1v1h-1zM1 5h1v1h-1zM1 6h1v1h-1zM1 7h1v1h-1zM2 8h1v1h-1z" fill="#404040"/><path d="M10 2h1v1h-1zM10 3h1v1h-1zM11 4h1v1h-1zM11 5h1v1h-1zM11 6h1v1h-1zM11 7h1v1h-1zM10 8h1v1h-1zM1 9h1v1h-1zM10 9h1v1h-1zM2 10h2v1h-2zM8 10h2v1h-2zM4 11h4v1h-4z" fill="#fff"/><path d="M4 2h4v1h-4zM3 3h6v1h-6zM2 4h8v1h-8zM2 5h8v1h-8zM2 6h8v1h-8zM2 7h8v1h-8zM3 8h6v1h-6zM4 9h4v1h-4z" fill="#fff"/><path d="M9 3h1v1h-1zM10 4h1v1h-1zM10 5h1v1h-1zM10 6h1v1h-1zM10 7h1v1h-1zM9 8h1v1h-1zM2 9h2v1h-2zM8 9h2v1h-2zM4 10h4v1h-4z" fill="#D4D0C8"/></svg>
<div class="t s" style="left:404px;top:303px"><u>5</u></div>
<div class="num sr g" style="left:448px;width:41px;top:305px">98</div>
<div class="num sr g" style="left:515px;width:38px;top:305px">1,03</div>
<svg class="radio" style="left:384px;top:327px" width="12" height="12" viewBox="0 0 12 12" shape-rendering="crispEdges"><path d="M4 0h4v1h-4zM2 1h2v1h-2zM8 1h2v1h-2zM1 2h1v1h-1zM1 3h1v1h-1zM0 4h1v1h-1zM0 5h1v1h-1zM0 6h1v1h-1zM0 7h1v1h-1zM1 8h1v1h-1z" fill="#808080"/><path d="M4 1h4v1h-4zM2 2h2v1h-2zM8 2h2v1h-2zM2 3h1v1h-1zM1 4h1v1h-1zM1 5h1v1h-1zM1 6h1v1h-1zM1 7h1v1h-1zM2 8h1v1h-1z" fill="#404040"/><path d="M10 2h1v1h-1zM10 3h1v1h-1zM11 4h1v1h-1zM11 5h1v1h-1zM11 6h1v1h-1zM11 7h1v1h-1zM10 8h1v1h-1zM1 9h1v1h-1zM10 9h1v1h-1zM2 10h2v1h-2zM8 10h2v1h-2zM4 11h4v1h-4z" fill="#fff"/><path d="M4 2h4v1h-4zM3 3h6v1h-6zM2 4h8v1h-8zM2 5h8v1h-8zM2 6h8v1h-8zM2 7h8v1h-8zM3 8h6v1h-6zM4 9h4v1h-4z" fill="#fff"/><path d="M9 3h1v1h-1zM10 4h1v1h-1zM10 5h1v1h-1zM10 6h1v1h-1zM10 7h1v1h-1zM9 8h1v1h-1zM2 9h2v1h-2zM8 9h2v1h-2zM4 10h4v1h-4z" fill="#D4D0C8"/></svg>
<div class="t s" style="left:404px;top:327px"><u>6</u></div>
<div class="num sr g" style="left:448px;width:41px;top:329px">122</div>
<div class="num sr g" style="left:515px;width:38px;top:329px">1,02</div>
<svg class="radio" style="left:384px;top:351px" width="12" height="12" viewBox="0 0 12 12" shape-rendering="crispEdges"><path d="M4 0h4v1h-4zM2 1h2v1h-2zM8 1h2v1h-2zM1 2h1v1h-1zM1 3h1v1h-1zM0 4h1v1h-1zM0 5h1v1h-1zM0 6h1v1h-1zM0 7h1v1h-1zM1 8h1v1h-1z" fill="#808080"/><path d="M4 1h4v1h-4zM2 2h2v1h-2zM8 2h2v1h-2zM2 3h1v1h-1zM1 4h1v1h-1zM1 5h1v1h-1zM1 6h1v1h-1zM1 7h1v1h-1zM2 8h1v1h-1z" fill="#404040"/><path d="M10 2h1v1h-1zM10 3h1v1h-1zM11 4h1v1h-1zM11 5h1v1h-1zM11 6h1v1h-1zM11 7h1v1h-1zM10 8h1v1h-1zM1 9h1v1h-1zM10 9h1v1h-1zM2 10h2v1h-2zM8 10h2v1h-2zM4 11h4v1h-4z" fill="#fff"/><path d="M4 2h4v1h-4zM3 3h6v1h-6zM2 4h8v1h-8zM2 5h8v1h-8zM2 6h8v1h-8zM2 7h8v1h-8zM3 8h6v1h-6zM4 9h4v1h-4z" fill="#fff"/><path d="M9 3h1v1h-1zM10 4h1v1h-1zM10 5h1v1h-1zM10 6h1v1h-1zM10 7h1v1h-1zM9 8h1v1h-1zM2 9h2v1h-2zM8 9h2v1h-2zM4 10h4v1h-4z" fill="#D4D0C8"/></svg>
<div class="t s" style="left:404px;top:351px"><u>7</u></div>
<div class="num sr r" style="left:448px;width:41px;top:354px">66</div>
<div class="num sr g" style="left:515px;width:38px;top:354px">0,51</div>
<svg class="radio" style="left:384px;top:375px" width="12" height="12" viewBox="0 0 12 12" shape-rendering="crispEdges"><path d="M4 0h4v1h-4zM2 1h2v1h-2zM8 1h2v1h-2zM1 2h1v1h-1zM1 3h1v1h-1zM0 4h1v1h-1zM0 5h1v1h-1zM0 6h1v1h-1zM0 7h1v1h-1zM1 8h1v1h-1z" fill="#808080"/><path d="M4 1h4v1h-4zM2 2h2v1h-2zM8 2h2v1h-2zM2 3h1v1h-1zM1 4h1v1h-1zM1 5h1v1h-1zM1 6h1v1h-1zM1 7h1v1h-1zM2 8h1v1h-1z" fill="#404040"/><path d="M10 2h1v1h-1zM10 3h1v1h-1zM11 4h1v1h-1zM11 5h1v1h-1zM11 6h1v1h-1zM11 7h1v1h-1zM10 8h1v1h-1zM1 9h1v1h-1zM10 9h1v1h-1zM2 10h2v1h-2zM8 10h2v1h-2zM4 11h4v1h-4z" fill="#fff"/><path d="M4 2h4v1h-4zM3 3h6v1h-6zM2 4h8v1h-8zM2 5h8v1h-8zM2 6h8v1h-8zM2 7h8v1h-8zM3 8h6v1h-6zM4 9h4v1h-4z" fill="#fff"/><path d="M9 3h1v1h-1zM10 4h1v1h-1zM10 5h1v1h-1zM10 6h1v1h-1zM10 7h1v1h-1zM9 8h1v1h-1zM2 9h2v1h-2zM8 9h2v1h-2zM4 10h4v1h-4z" fill="#D4D0C8"/></svg>
<div class="t s" style="left:404px;top:375px"><u>8</u></div>
<div class="num sr y" style="left:448px;width:41px;top:378px">85</div>
<div class="num sr g" style="left:515px;width:38px;top:378px">0,50</div>
<svg class="radio" style="left:384px;top:399px" width="12" height="12" viewBox="0 0 12 12" shape-rendering="crispEdges"><path d="M4 0h4v1h-4zM2 1h2v1h-2zM8 1h2v1h-2zM1 2h1v1h-1zM1 3h1v1h-1zM0 4h1v1h-1zM0 5h1v1h-1zM0 6h1v1h-1zM0 7h1v1h-1zM1 8h1v1h-1z" fill="#808080"/><path d="M4 1h4v1h-4zM2 2h2v1h-2zM8 2h2v1h-2zM2 3h1v1h-1zM1 4h1v1h-1zM1 5h1v1h-1zM1 6h1v1h-1zM1 7h1v1h-1zM2 8h1v1h-1z" fill="#404040"/><path d="M10 2h1v1h-1zM10 3h1v1h-1zM11 4h1v1h-1zM11 5h1v1h-1zM11 6h1v1h-1zM11 7h1v1h-1zM10 8h1v1h-1zM1 9h1v1h-1zM10 9h1v1h-1zM2 10h2v1h-2zM8 10h2v1h-2zM4 11h4v1h-4z" fill="#fff"/><path d="M4 2h4v1h-4zM3 3h6v1h-6zM2 4h8v1h-8zM2 5h8v1h-8zM2 6h8v1h-8zM2 7h8v1h-8zM3 8h6v1h-6zM4 9h4v1h-4z" fill="#fff"/><path d="M9 3h1v1h-1zM10 4h1v1h-1zM10 5h1v1h-1zM10 6h1v1h-1zM10 7h1v1h-1zM9 8h1v1h-1zM2 9h2v1h-2zM8 9h2v1h-2zM4 10h4v1h-4z" fill="#D4D0C8"/></svg>
<div class="t s" style="left:404px;top:399px"><u>9</u></div>
<div class="num sr g" style="left:448px;width:41px;top:402px">102</div>
<div class="num sr g" style="left:515px;width:38px;top:402px">1,50</div>
<svg class="radio" style="left:384px;top:423px" width="12" height="12" viewBox="0 0 12 12" shape-rendering="crispEdges"><path d="M4 0h4v1h-4zM2 1h2v1h-2zM8 1h2v1h-2zM1 2h1v1h-1zM1 3h1v1h-1zM0 4h1v1h-1zM0 5h1v1h-1zM0 6h1v1h-1zM0 7h1v1h-1zM1 8h1v1h-1z" fill="#808080"/><path d="M4 1h4v1h-4zM2 2h2v1h-2zM8 2h2v1h-2zM2 3h1v1h-1zM1 4h1v1h-1zM1 5h1v1h-1zM1 6h1v1h-1zM1 7h1v1h-1zM2 8h1v1h-1z" fill="#404040"/><path d="M10 2h1v1h-1zM10 3h1v1h-1zM11 4h1v1h-1zM11 5h1v1h-1zM11 6h1v1h-1zM11 7h1v1h-1zM10 8h1v1h-1zM1 9h1v1h-1zM10 9h1v1h-1zM2 10h2v1h-2zM8 10h2v1h-2zM4 11h4v1h-4z" fill="#fff"/><path d="M4 2h4v1h-4zM3 3h6v1h-6zM2 4h8v1h-8zM2 5h8v1h-8zM2 6h8v1h-8zM2 7h8v1h-8zM3 8h6v1h-6zM4 9h4v1h-4z" fill="#fff"/><path d="M9 3h1v1h-1zM10 4h1v1h-1zM10 5h1v1h-1zM10 6h1v1h-1zM10 7h1v1h-1zM9 8h1v1h-1zM2 9h2v1h-2zM8 9h2v1h-2zM4 10h4v1h-4z" fill="#D4D0C8"/></svg>
<div class="t s" style="left:404px;top:423px">1<u>0</u></div>
<div class="num sr r" style="left:448px;width:41px;top:426px">51</div>
<div class="num sr g" style="left:515px;width:38px;top:426px">1,49</div>
<!-- OK button -->
<div class="a" style="left:609px;top:425px;width:49px;height:26px;border-top:1px solid #fff;border-left:1px solid #fff;border-right:1px solid #404040;border-bottom:1px solid #404040;box-shadow:inset -1px -1px 0 #808080"></div>
<svg class="a" style="left:619px;top:431px" width="13" height="16" viewBox="0 0 13 16">
<rect x="0" y="2" width="12" height="14" fill="#fff"/>
<rect x="11" y="4" width="1.2" height="12" fill="#000"/><rect x="0" y="15" width="12.2" height="1.2" fill="#000"/>
<path d="M9.5,1.5 L4,11" stroke="#000" stroke-width="3.2"/>
<path d="M9,1.5 L3.5,11" stroke="#ffff00" stroke-width="2"/>
<path d="M7.5,2.5 L2.5,11" stroke="#e0e0f0" stroke-width="0.8"/>
<rect x="7.5" y="0" width="2.5" height="2" fill="#e00000"/><rect x="10" y="0" width="1" height="2.5" fill="#000"/>
<rect x="2.5" y="10.5" width="2" height="2" fill="#000"/>
</svg>
<div class="t s" style="left:635px;top:432px"><u>O</u>K</div>

<!-- status bar -->
<div class="sb" style="left:4px;width:151px"></div>
<div class="sb" style="left:156px;width:49px"></div>
<div class="sb" style="left:206px;width:199px"></div>
<div class="sb" style="left:406px;width:99px"></div>
<div class="sb" style="left:506px;width:99px"></div>
<div class="sb" style="left:606px;width:49px"></div>
<div class="sb" style="left:656px;width:140px"></div>
<div class="t" style="left:4px;top:548px;width:151px;text-align:center">Om dette program</div>
<div class="t" style="left:161px;top:548px">Serie  1</div>
<div class="t" style="left:204px;top:548px;width:199px;text-align:center">Brugernavn: Maria Thuesen</div>
<div class="t" style="left:407px;top:548px">Klasse: 1999A</div>
<div class="t" style="left:656px;top:548px;width:140px;text-align:center">F1 = Hjælp</div>
<div class="a" style="left:783px;top:555px;width:13px;height:13px;background:#D4D0C8"></div><svg class="a" style="left:783px;top:555px" width="13" height="13" viewBox="0 0 13 13" shape-rendering="crispEdges">
<path d="M12,1 L1,12 M12,5 L5,12 M12,9 L9,12" stroke="#fff" stroke-width="1"/>
<path d="M12,2 L2,12 M12,3 L3,12 M12,6 L6,12 M12,7 L7,12 M12,10 L10,12 M12,11 L11,12" stroke="#808080" stroke-width="1"/>
</svg>
</body></html>
